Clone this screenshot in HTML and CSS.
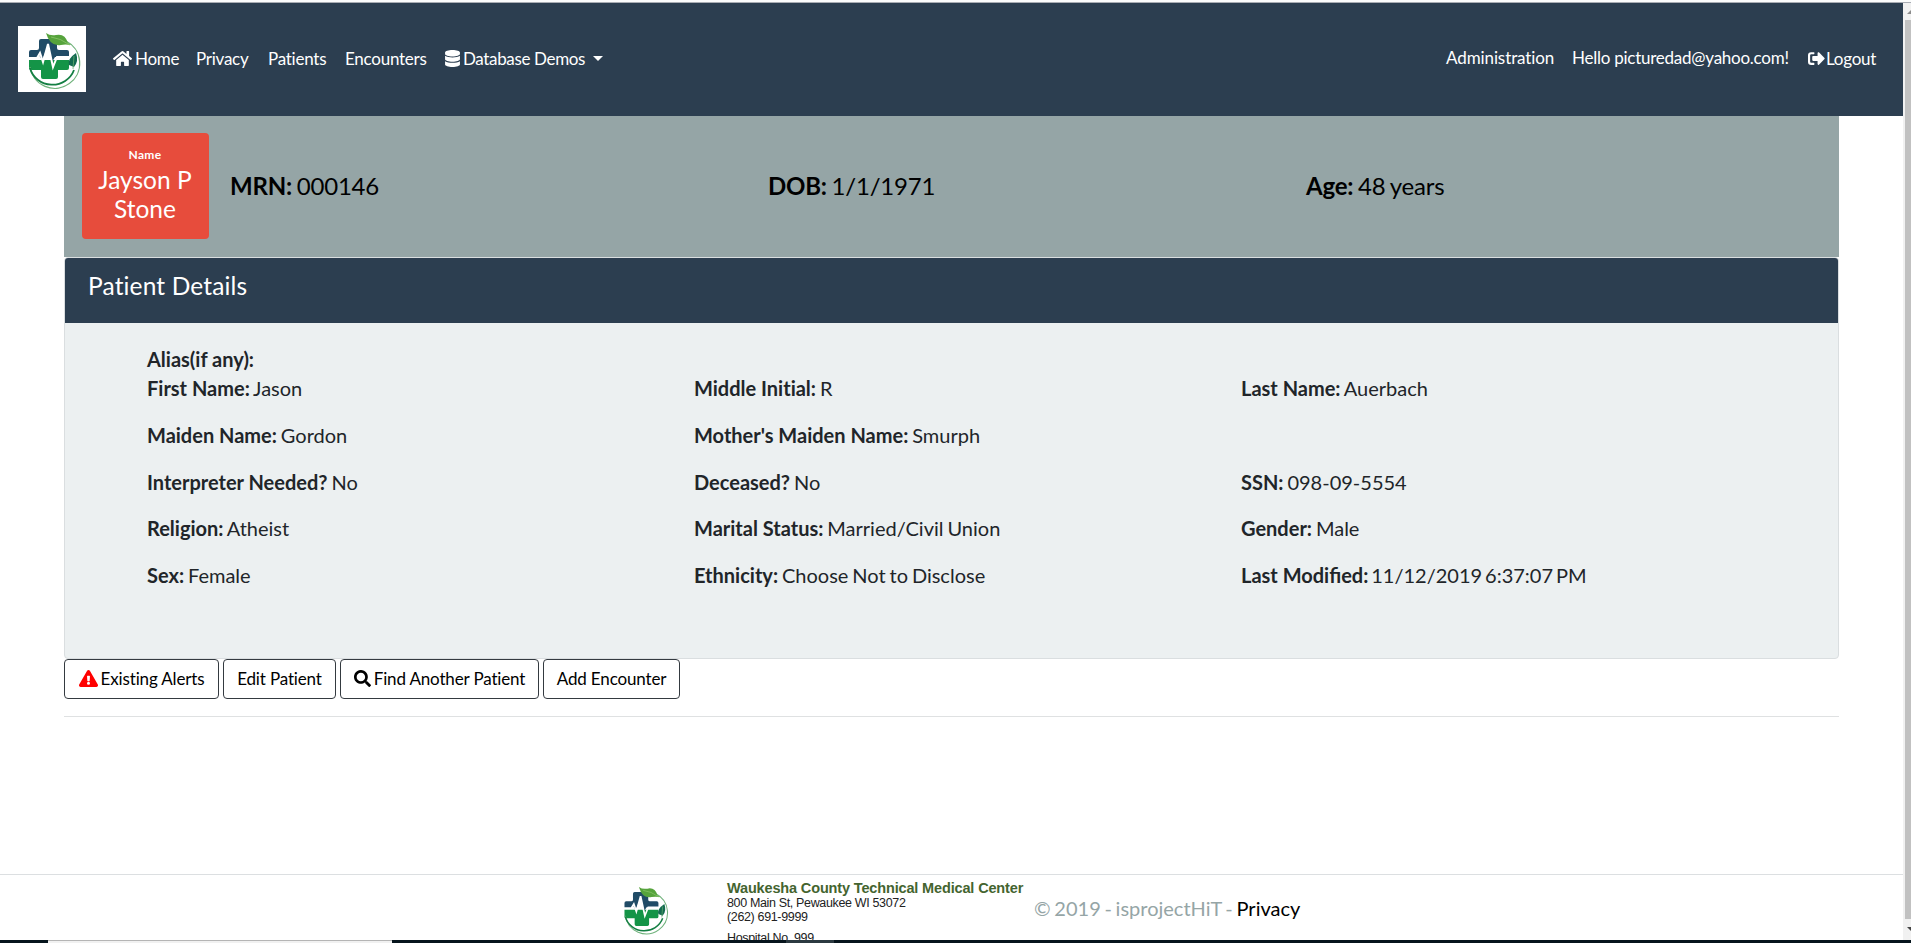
FILE: index.html
```
<!DOCTYPE html>
<html lang="en">
<head>
<meta charset="utf-8">
<title>Patient Details</title>
<link rel="stylesheet" href="styles.css">
</head>
<body>
<svg class="defs" width="0" height="0">
  <symbol id="logo" viewBox="0 0 68 66">
    <path d="M11 34h40v8q0 2-2 2h-9v7q0 2-2 2H25q-2 0-2-2v-7H13q-2 0-2-2z" fill="#149447"/>
    <path d="M13 24h6q2 0 2-2v-7q0-2 2-2h14q2 0 2 2v7q0 2 2 2h8q2 0 2 2v5H37l-3 5-4-16-6 14-3-5-3 4h-7v-7q0-2 2-2z" fill="#204b66"/>
    <path d="M10 32h9l3-5 3 9 5-18 5 23 4-10h13" fill="none" stroke="#fff" stroke-width="2"/>
    <path d="M12 41A25 25 0 1 0 48 15" fill="none" stroke="#6fb27b" stroke-width="1.2"/>
    <path d="M12 42A23 22 0 0 0 56 44" fill="none" stroke="#147f43" stroke-width="1.8"/>
    <path d="M28 7q4 3 10 2 9-2 12 8 2 1 3 2-6-1-10 0-11 2-15-12z" fill="#56a33c"/>
    <path d="M33 11q9 1 19 8" fill="none" stroke="#8dc66b" stroke-width=".8"/>
    <path d="M58 27q-9 6-7 12l5 2q5-6 2-14z" fill="#146b50"/>
    <path d="M56 30l-1 13" fill="none" stroke="#65af6e" stroke-width=".8"/>
  </symbol>
</svg>
<div class="topline"></div>
<div class="window">
  <div class="page">
    <nav class="navbar">
      <div class="brand"><svg><use href="#logo"/></svg></div>
      <a class="home"><svg class="i-home" viewBox="0 0 576 512"><path fill="currentColor" d="M280 148L96 300v164a16 16 0 0 0 16 16h112a16 16 0 0 0 16-16v-96a16 16 0 0 1 16-16h64a16 16 0 0 1 16 16v96a16 16 0 0 0 16 16h112a16 16 0 0 0 16-16V300L296 148a12 12 0 0 0-16 0zM571 251l-83-69V44a12 12 0 0 0-12-12h-56a12 12 0 0 0-12 12v72l-89-74a48 48 0 0 0-61 0L5 251a12 12 0 0 0-2 17l26 31a12 12 0 0 0 17 2L280 107a12 12 0 0 1 16 0l235 194a12 12 0 0 0 17-2l25-31a12 12 0 0 0-2-17z"/></svg>Home</a>
      <a class="privacy">Privacy</a>
      <a class="patients">Patients</a>
      <a class="encounters">Encounters</a>
      <a class="demos"><svg class="i-db" viewBox="0 0 448 512"><path fill="currentColor" d="M448 73v46c0 40-100 73-224 73S0 159 0 119V73C0 33 100 0 224 0s224 33 224 73zm0 103v103c0 40-100 73-224 73S0 319 0 279V176c48 33 136 48 224 48s176-15 224-48zm0 160v103c0 40-100 73-224 73S0 479 0 439V336c48 33 136 48 224 48s176-15 224-48z"/></svg>Database Demos<span class="caret"></span></a>
      <div class="account">
        <a class="admin">Administration</a>
        <a class="hello">Hello picturedad@yahoo.com!</a>
        <a class="logout"><svg class="i-out" viewBox="0 0 512 512"><path fill="currentColor" d="M497 273L329 441c-15 15-41 5-41-17v-96H152a24 24 0 0 1-24-24v-96a24 24 0 0 1 24-24h136V88c0-21 26-32 41-17l168 168c9 9 9 25 0 34zM192 436v-40a12 12 0 0 0-12-12H96a32 32 0 0 1-32-32V160a32 32 0 0 1 32-32h84a12 12 0 0 0 12-12V76a12 12 0 0 0-12-12H96A96 96 0 0 0 0 160v192a96 96 0 0 0 96 96h84a12 12 0 0 0 12-12z"/></svg>Logout</a>
      </div>
    </nav>
    <main class="container">
      <section class="banner">
        <div class="name-card"><small>Name</small><span>Jayson P<br>Stone</span></div>
        <div class="facts">
          <div><b>MRN:</b> 000146</div>
          <div><b>DOB:</b> 1/1/1971</div>
          <div><b>Age:</b> 48 years</div>
        </div>
      </section>
      <section class="card">
        <h2>Patient Details</h2>
        <div class="details">
          <div class="alias"><b>Alias(if any):</b></div>
          <div><b>First Name:</b> Jason</div><div><b>Middle Initial:</b> R</div><div><b>Last Name:</b> Auerbach</div>
          <div><b>Maiden Name:</b> Gordon</div><div><b>Mother's Maiden Name:</b> Smurph</div><div></div>
          <div><b>Interpreter Needed?</b> No</div><div><b>Deceased?</b> No</div><div><b>SSN:</b> 098-09-5554</div>
          <div><b>Religion:</b> Atheist</div><div><b>Marital Status:</b> Married/Civil Union</div><div><b>Gender:</b> Male</div>
          <div><b>Sex:</b> Female</div><div><b>Ethnicity:</b> Choose Not to Disclose</div><div class="modified"><b>Last Modified:</b> 11/12/2019 6:37:07 PM</div>
        </div>
      </section>
      <div class="actions">
        <a class="btn b1"><svg class="i-warn" viewBox="0 0 576 512"><path fill="currentColor" fill-rule="evenodd" d="M570 440c18 32-5 72-42 72H48c-37 0-60-40-42-72L246 24c19-32 65-32 84 0l240 416zM288 354a46 46 0 1 0 0 92 46 46 0 0 0 0-92zm-44-165l8 136a12 12 0 0 0 12 11h48a12 12 0 0 0 12-11l8-136a12 12 0 0 0-12-13h-64a12 12 0 0 0-12 13z"/></svg>Existing Alerts</a>
        <a class="btn b2">Edit Patient</a>
        <a class="btn b3"><svg class="i-find" viewBox="0 0 512 512"><path fill="currentColor" fill-rule="evenodd" d="M505 443L405 343c-4-5-11-7-17-7h-16A208 208 0 1 0 336 372v16c0 6 2 13 7 17l100 100c9 9 24 9 34 0l28-28c9-10 9-25 0-34zM208 336a128 128 0 1 1 0-256 128 128 0 0 1 0 256z"/></svg>Find Another Patient</a>
        <a class="btn b4">Add Encounter</a>
      </div>
      <hr>
    </main>
    <footer class="footer">
      <svg class="foot-logo"><use href="#logo"/></svg>
      <address><b>Waukesha County Technical Medical Center</b><span>800 Main St, Pewaukee WI 53072</span><span>(262) 691-9999</span><span class="hosp">Hospital No. 999</span></address>
      <p>© 2019 - isprojectHiT - <a>Privacy</a></p>
    </footer>
  </div>
  <div class="scrollbar">
    <svg class="arrow" viewBox="0 0 8 17"><path d="M4 11l4-4v4z" fill="#8b8b8b"/></svg>
    <div class="thumb"></div>
    <svg class="arrow" viewBox="0 0 8 17"><path d="M4 6h4v4z" fill="#454545"/></svg>
  </div>
</div>
<div class="taskbar"><i></i><u></u></div>
</body>
</html>
```
FILE: styles.css
```
* { box-sizing: border-box; }
body { margin: 0; height: 943px; overflow: hidden; background: #fff; color: #212529; font: 20px/29px Lato, sans-serif; font-variant-ligatures: none; display: flex; flex-direction: column; }
.defs { position: absolute; }
svg { display: block; flex: none; }
.topline { height: 3px; flex: none; background: #fbfcfc; border-bottom: 1px solid #a9adb4; }
.window { display: flex; height: 937px; flex: none; }
.page { width: 1903px; height: 937px; display: flex; flex-direction: column; overflow: hidden; }
.navbar { height: 113px; flex: none; background: #2c3e50; color: #fff; display: flex; align-items: center; padding: 0 28px 2px 18px; font-size: 17px; letter-spacing: -.25px; line-height: 26px; white-space: nowrap; }
.navbar a { display: flex; align-items: center; }
.brand { width: 68px; height: 66px; background: #fff; margin-right: 27px; }
.brand svg { width: 68px; height: 66px; }
.home { width: 83px; }
.privacy { width: 72px; }
.patients { width: 77px; }
.encounters { width: 100px; }
.i-home { width: 19px; height: 17px; margin-right: 3px; }
.i-db { width: 15px; height: 17px; margin-right: 3px; }
.demos { letter-spacing: -.35px; }
.caret { border: 5px solid transparent; border-top-color: #fff; border-bottom: 0; margin-left: 8px; }
.account { display: flex; margin-left: auto; }
.admin { width: 126px; letter-spacing: -.1px; }
.hello { width: 236px; }
.admin, .hello { margin-top: -1px; }
.logout { width: 67px; }
.i-out { width: 17px; height: 17px; margin-right: 1px; }
.container { width: 1775px; margin-left: 64px; flex: none; }
.banner { height: 141px; background: #95a5a6; display: flex; align-items: center; padding: 0 18px 2px; color: #000; }
.name-card { width: 127px; height: 106px; background: #e74c3c; color: #fff; border-radius: 4px; text-align: center; padding: 15px 1px 0 0; font-size: 24.5px; line-height: 29px; }
.name-card small { display: block; font-size: 12px; letter-spacing: .3px; line-height: 14px; font-weight: 700; margin-bottom: 3px; }
.name-card span { display: block; }
.facts { flex: 1; display: grid; grid-template-columns: 538px 538px 1fr; padding-left: 21px; font-size: 24px; letter-spacing: -.2px; word-spacing: -1.2px; }
.card { height: 402px; border: 1px solid #dadee0; border-radius: 4px; background: #ecf0f1; }
.card h2 { margin: 0; height: 65px; background: #2c3e50; color: #fff; border-radius: 3px 3px 0 0; padding: 13px 22px 13px 23px; font-size: 24.5px; letter-spacing: .15px; line-height: 29px; font-weight: 400; }
.details { display: grid; grid-template-columns: 547px 547px 1fr; grid-template-rows: 29px; grid-auto-rows: 46.75px; padding: 22px 0 0 82px; word-spacing: -1.2px; }
.details b { word-spacing: 0; }
.alias { grid-column: 1 / -1; }
.modified { font-variant-ligatures: normal; word-spacing: -2.2px; }
.actions { display: flex; gap: 4px; height: 40px; color: #000; font-size: 17px; letter-spacing: -.15px; }
.btn { display: flex; align-items: center; justify-content: center; height: 40px; border: 1px solid #343a40; border-radius: 4px; background: #fff; white-space: nowrap; padding-bottom: 2px; }
.b1 { width: 155px; } .b2 { width: 113px; } .b3 { width: 199px; } .b4 { width: 137px; }
.i-warn { width: 19px; height: 17px; color: #f00; margin-right: 3px; }
.i-find { width: 17px; height: 17px; margin-right: 3px; }
hr { margin: 17px 0 0; border: 0; border-top: 1px solid #dfe1e2; }
.footer { margin-top: auto; height: 66px; flex: none; border-top: 1px solid #dcdfe1; display: flex; overflow: hidden; }
.foot-logo { width: 58px; height: 56px; margin: 6px 0 0 615px; }
address { font: 12.5px/14px "Liberation Sans", Arial, sans-serif; letter-spacing: -.35px; width: 307px; margin-left: 54px; padding-top: 5px; color: #222; white-space: nowrap; }
address b { display: block; font-size: 14.5px; letter-spacing: -.15px; line-height: 16px; color: #44642f; }
address span { display: block; }
.hosp { margin-top: 7px; }
.footer p { margin: 19px 0 0; color: #95a5a6; word-spacing: -1.4px; }
.footer a { color: #000; }
.scrollbar { width: 8px; background: #f1f1f1; display: flex; flex-direction: column; }
.thumb { flex: 1; margin-left: 2px; background: #c1c1c1; }
.arrow { width: 8px; height: 17px; }
.arrow:last-child { height: 21px; }
.taskbar { height: 3px; flex: none; background: #06141c; display: flex; }
.taskbar i { width: 344px; margin-left: 48px; background: #f1f1f1; border-top: 1px solid #b5b5b5; }
.taskbar u { width: 48px; margin-left: 394px; background: #2b3940; }
```
